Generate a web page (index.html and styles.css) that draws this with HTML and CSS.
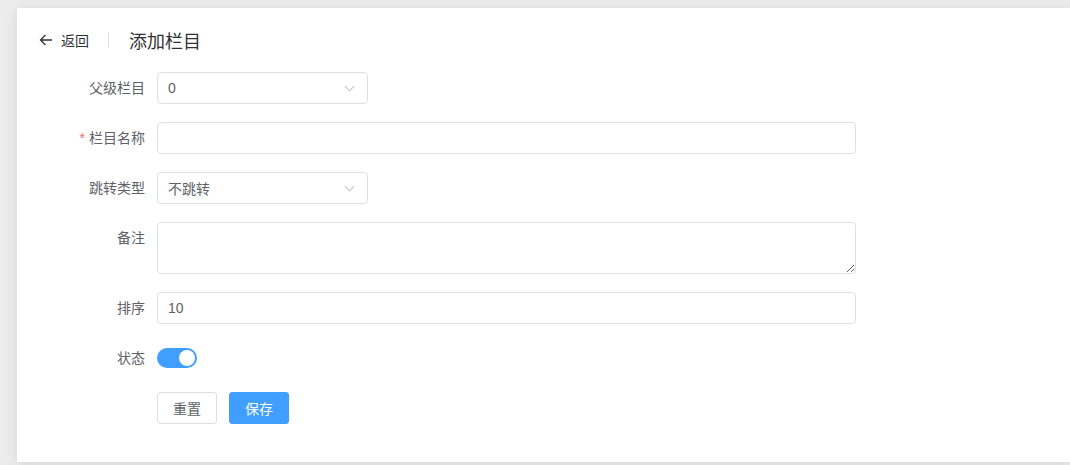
FILE: index.html
```html
<!DOCTYPE html>
<html lang="zh-CN">
<head>
  <meta charset="UTF-8" />
  <meta name="viewport" content="width=device-width, initial-scale=1.0"/>
  <title>添加栏目</title>
  <link rel="stylesheet" href="styles.css">
</head>
<body>

  <div class="page">
    <div class="card">

      <div class="page-header">
        <div class="back">
          <svg class="back-icon" viewBox="0 0 14 14" width="14" height="14">
            <path d="M13 7H1.5M6.5 2L1.5 7l5 5" fill="none" stroke="#303133" stroke-width="1.3"/>
          </svg>
          <span>返回</span>
        </div>
        <div class="divider"></div>
        <div class="title">添加栏目</div>
      </div>

      <form class="form">
        <div class="form-item">
          <label class="form-label">父级栏目</label>
          <div class="form-content">
            <div class="select">
              <input type="text" class="input" value="0" readonly />
              <span class="arrow"></span>
            </div>
          </div>
        </div>

        <div class="form-item">
          <label class="form-label required">栏目名称</label>
          <div class="form-content">
            <input type="text" class="input wide" />
          </div>
        </div>

        <div class="form-item">
          <label class="form-label">跳转类型</label>
          <div class="form-content">
            <div class="select">
              <input type="text" class="input" value="不跳转" readonly />
              <span class="arrow"></span>
            </div>
          </div>
        </div>

        <div class="form-item">
          <label class="form-label">备注</label>
          <div class="form-content">
            <textarea class="textarea wide" rows="2"></textarea>
          </div>
        </div>

        <div class="form-item">
          <label class="form-label">排序</label>
          <div class="form-content">
            <input type="text" class="input wide" value="10" />
          </div>
        </div>

        <div class="form-item">
          <label class="form-label">状态</label>
          <div class="form-content">
            <span class="switch is-on"><span class="switch-knob"></span></span>
          </div>
        </div>

        <div class="form-item">
          <label class="form-label"></label>
          <div class="form-content buttons">
            <button type="button" class="btn">重置</button>
            <button type="button" class="btn btn-primary">保存</button>
          </div>
        </div>
      </form>

    </div>
  </div>

</body>
</html>
```

FILE: styles.css
```css
html, body {
  margin: 0;
  padding: 0;
  overflow: hidden;
}

body {
  font-family: 'Liberation Sans', 'Noto Sans CJK SC', sans-serif;
  background-color: #ececec;
  color: #606266;
  height: 465px;
}

.page {
  padding: 8px 0 0 17px;
}

.card {
  background-color: #fff;
  height: 414px;
  padding: 20px;
  box-shadow: 0 2px 12px 0 rgba(0, 0, 0, 0.1);
}

.page-header {
  display: flex;
  align-items: center;
  height: 24px;
  margin-bottom: 20px;
}

.back {
  display: flex;
  align-items: center;
  font-size: 14px;
  color: #303133;
  cursor: pointer;
}

.back-icon {
  margin: 0 8px 0 2px;
}

.divider {
  width: 1px;
  height: 16px;
  background-color: #dcdfe6;
  margin: 0 20px 0 19px;
}

.title {
  font-size: 18px;
  color: #303133;
}

.form-item {
  display: flex;
  align-items: flex-start;
  margin-bottom: 18px;
}

.form-label {
  width: 120px;
  box-sizing: border-box;
  padding-right: 12px;
  text-align: right;
  font-size: 14px;
  line-height: 32px;
  color: #606266;
}

.form-label.required::before {
  content: '*';
  color: #f56c6c;
  margin-right: 4px;
}

.form-content {
  min-height: 32px;
  display: flex;
  align-items: center;
}

.input {
  box-sizing: border-box;
  width: 211px;
  height: 32px;
  padding: 0 10px;
  border: 1px solid #dcdfe6;
  border-radius: 4px;
  font-family: inherit;
  font-size: 14px;
  color: #606266;
  outline: none;
  background: #fff;
}

.wide {
  width: 699px;
}

.select {
  position: relative;
}

.select .input {
  cursor: pointer;
}

.arrow {
  position: absolute;
  right: 15px;
  top: 11px;
  width: 6px;
  height: 6px;
  border-right: 1px solid #c0c4cc;
  border-bottom: 1px solid #c0c4cc;
  transform: rotate(45deg);
}

.textarea {
  box-sizing: border-box;
  height: 52px;
  padding: 5px 10px;
  border: 1px solid #dcdfe6;
  border-radius: 4px;
  font-family: inherit;
  font-size: 14px;
  color: #606266;
  outline: none;
  resize: vertical;
  display: block;
}

.switch {
  display: inline-block;
  position: relative;
  width: 40px;
  height: 20px;
  border-radius: 10px;
  background-color: #dcdfe6;
}

.switch.is-on {
  background-color: #409eff;
}

.switch-knob {
  position: absolute;
  top: 2px;
  left: 2px;
  width: 16px;
  height: 16px;
  border-radius: 50%;
  background-color: #fff;
}

.switch.is-on .switch-knob {
  left: 22px;
}

.buttons {
  gap: 12px;
}

.btn {
  box-sizing: border-box;
  width: 60px;
  height: 32px;
  padding: 0;
  border: 1px solid #dcdfe6;
  border-radius: 3px;
  background-color: #fff;
  color: #606266;
  font-family: inherit;
  font-size: 14px;
  cursor: pointer;
}

.btn-primary {
  background-color: #409eff;
  border-color: #409eff;
  color: #fff;
}
```
